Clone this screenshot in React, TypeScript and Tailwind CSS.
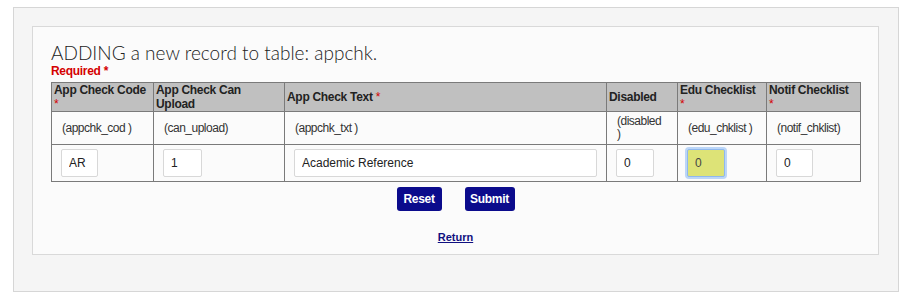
import { Fragment } from "react";

const cols = [
  { label: "App Check Code", req: true, reqBreak: true, field: ["(appchk_cod )"], value: "AR", w: 102, iw: "w-[37px]" },
  { label: "App Check Can Upload", req: false, reqBreak: false, field: ["(can_upload)"], value: "1", w: 131, iw: "w-[39px]" },
  { label: "App Check Text", req: true, reqBreak: false, field: ["(appchk_txt )"], value: "Academic Reference", w: 322, iw: "w-[303px]" },
  { label: "Disabled", req: false, reqBreak: false, field: ["(disabled", ")"], value: "0", w: 71, iw: "w-[38px]" },
  { label: "Edu Checklist", req: true, reqBreak: true, field: ["(edu_chklist )"], value: "0", w: 89, iw: "w-[38px]" },
  { label: "Notif Checklist", req: true, reqBreak: true, field: ["(notif_chklist)"], value: "0", w: 94, iw: "w-[37px]" },
];

export default function App() {
  return (
    <div className="w-[906px] h-[299px] bg-white pt-[7px] pl-[13px] font-['Liberation_Sans',Arial,sans-serif]">
      <div className="w-[886px] h-[285px] bg-[#f5f5f5] border border-[#d6d6d6] pt-[18px] pl-[18px]">
        <div className="w-[847px] h-[229px] bg-[#fbfbfb] border border-[#d9d9d9] px-[18px] pt-[15px]">
          <h1 className="font-['Lato',sans-serif] font-light text-[19px] leading-[22px] text-[#222]">
            ADDING a new record to table: appchk.
          </h1>
          <p className="text-[#d40000] text-[12px] font-bold leading-[14px] tracking-[-0.3px] mb-[4px]">Required *</p>
          <table className="table-fixed border-collapse w-[809px] text-[#222]">
            <colgroup>
              {cols.map((c) => (
                <col key={c.label} style={{ width: c.w }} />
              ))}
            </colgroup>
            <thead>
              <tr className="bg-[#c0c0c0] h-[28px]">
                {cols.map((c) => (
                  <th
                    key={c.label}
                    className="border border-[#7a7a7a] px-[2px] py-0 text-left align-middle text-[12px] font-bold leading-[14px] tracking-[-0.3px]"
                  >
                    {c.label}
                    {c.req && (
                      <span className="text-[#d40000] font-normal">
                        {c.reqBreak ? <br /> : " "}*
                      </span>
                    )}
                  </th>
                ))}
              </tr>
            </thead>
            <tbody>
              <tr className="h-[33px]">
                {cols.map((c) => (
                  <td
                    key={c.label}
                    className="border border-[#7a7a7a] px-[10px] align-middle text-[12px] leading-[13px] tracking-[-0.5px] text-[#333] whitespace-nowrap"
                  >
                    {c.field.map((line, j) => (
                      <Fragment key={j}>
                        {j > 0 && <br />}
                        {line}
                      </Fragment>
                    ))}
                  </td>
                ))}
              </tr>
              <tr className="h-[37px]">
                {cols.map((c, i) => (
                  <td key={c.label} className="border border-[#7a7a7a] px-[9px] align-middle">
                    <input
                      readOnly
                      value={c.value}
                      className={
                        i === 4
                          ? `${c.iw} h-[28px] rounded-[2px] border border-[#8fb8ee] bg-[#dde377] px-[7px] text-[12px] text-[#444] outline-none shadow-[0_0_0_2px_#bcd6f7]`
                          : `${c.iw} h-[28px] rounded-[2px] border border-[#d8d8d8] bg-white px-[7px] text-[12px] text-[#222] outline-none`
                      }
                    />
                  </td>
                ))}
              </tr>
            </tbody>
          </table>
          <div className="flex justify-center gap-[23px] mt-[5px]">
            <button className="w-[45px] h-[24px] rounded-[3px] bg-[#0b0b8c] text-white text-[12px] font-bold tracking-[-0.3px]">
              Reset
            </button>
            <button className="w-[50px] h-[24px] rounded-[3px] bg-[#0b0b8c] text-white text-[12px] font-bold tracking-[-0.3px]">
              Submit
            </button>
          </div>
          <div className="flex justify-center mt-[20px]">
            <a href="#" className="text-[11px] font-bold text-[#101080] underline leading-[12px]">
              Return
            </a>
          </div>
        </div>
      </div>
    </div>
  );
}
